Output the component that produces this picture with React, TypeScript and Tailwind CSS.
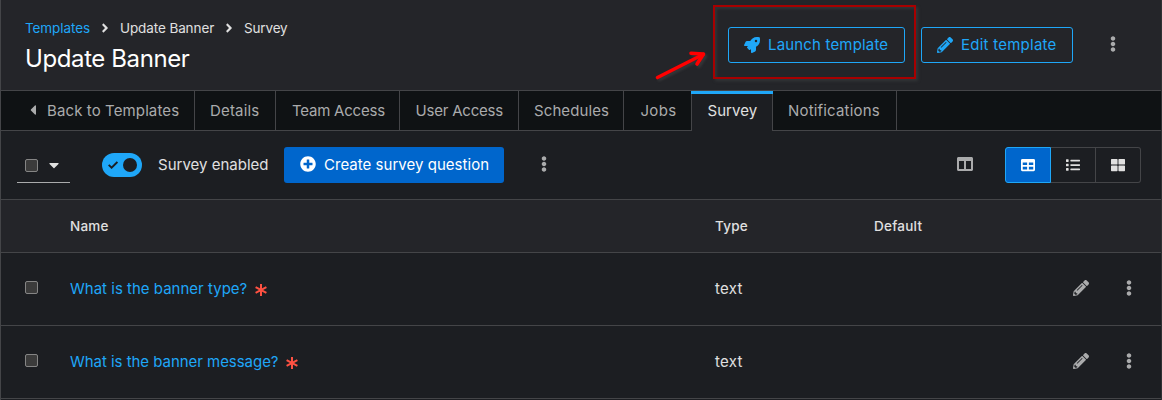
import type { ReactNode } from "react";
import {
  FaAngleRight,
  FaCaretDown,
  FaCaretLeft,
  FaColumns,
  FaEllipsisV,
  FaList,
  FaPencilAlt,
  FaPlusCircle,
  FaRocket,
  FaTable,
  FaThLarge,
} from "react-icons/fa";

type Tab = { label: string; className: string; active?: boolean; back?: boolean };

const tabs: Tab[] = [
  { label: "Back to Templates", className: "w-[194px] pl-[46px] tracking-[0.11px]", back: true },
  { label: "Details", className: "w-[81px] pl-[15px] tracking-[0.18px]" },
  { label: "Team Access", className: "w-[124px] pl-[16px] tracking-[-0.22px]" },
  { label: "User Access", className: "w-[119px] pl-[15.5px] tracking-[-0.2px]" },
  { label: "Schedules", className: "w-[105px] pl-[15px] tracking-[0.1px]" },
  { label: "Jobs", className: "w-[68px] pl-[16.5px] tracking-[0.3px]" },
  { label: "Survey", className: "w-[81px] pl-[15.5px] tracking-[0.05px]", active: true },
  { label: "Notifications", className: "w-[124px] pl-[15px] tracking-[0.18px]" },
];

const questions = [
  { name: "What is the banner type?", type: "text", tracking: "tracking-[0.01px]" },
  { name: "What is the banner message?", type: "text", tracking: "tracking-[-0.04px]" },
];

function Checkbox() {
  return <span className="block size-[13px] shrink-0 rounded-[2px] border border-[#858585] bg-[#3b3b3b]" />;
}

function Kebab() {
  return <FaEllipsisV className="block size-4 shrink-0 text-[#aaabac]" />;
}

function Asterisk() {
  return (
    <svg className="mt-[2px] ml-2 block h-3 w-3 shrink-0" viewBox="0 0 12 12" fill="none" stroke="#fe5142" strokeWidth="2">
      <path d="M6 0V12M0.6 3.2L11.4 8.8M11.4 3.2L0.6 8.8" />
    </svg>
  );
}

function OutlineButton({ children, className }: { children: ReactNode; className: string }) {
  return (
    <button className={`flex h-9 items-center gap-2 rounded-[3px] border border-[#1fa7f8] pl-[15px] text-[#1fa7f8] ${className}`}>
      {children}
    </button>
  );
}

function PageHeader() {
  return (
    <header className="flex h-[91px] border-b border-[#444548] bg-[#242529] pl-6">
      <div className="w-[703px] pt-[18px]">
        <nav className="flex h-5 items-center text-[13.5px] leading-5 text-[#e0e0e0]">
          <a className="w-[73px] tracking-[-0.08px] text-[#1fa7f8]">Templates</a>
          <FaAngleRight className="size-[14px]" />
          <span className="ml-2 w-[102px] tracking-[-0.1px]">Update Banner</span>
          <FaAngleRight className="size-[14px]" />
          <span className="ml-2 tracking-[-0.15px]">Survey</span>
        </nav>
        <h1 className="mt-[6px] text-[24px] leading-[30px] font-[430] tracking-[-0.4px] text-white">Update Banner</h1>
      </div>
      <div className="relative mt-[27px] flex h-9 items-center">
        <OutlineButton className="w-[177px]">
          <FaRocket className="size-4" />
          <span className="tracking-[0.17px] whitespace-nowrap">Launch template</span>
        </OutlineButton>
        <OutlineButton className="ml-4 w-[152px]">
          <FaPencilAlt className="size-4" />
          <span className="tracking-[0.25px] whitespace-nowrap">Edit template</span>
        </OutlineButton>
        <span className="-mt-[2px] ml-8">
          <Kebab />
        </span>
        <div className="absolute -top-[22px] -left-[15px] h-[74px] w-[203px] border-2 border-[#a80000] shadow-[2px_2px_3px_rgba(75,80,80,0.4),inset_2px_2px_3px_rgba(75,80,80,0.35)]" />
        <svg
          className="absolute top-[20px] -left-[76px] h-9 w-[58px] drop-shadow-[2px_2px_1px_rgba(80,80,80,0.4)]"
          viewBox="0 0 58 36"
          fill="none"
          stroke="#ff0000"
          strokeWidth="3.6"
          strokeLinecap="round"
          strokeLinejoin="round"
        >
          <path d="M5.5 30.5L51 7.5" />
          <path d="M39 6.2L51.5 7L45 17" />
        </svg>
      </div>
    </header>
  );
}

function TabBar() {
  return (
    <nav className="flex h-10 bg-[#0f1214] text-[#aaabac]">
      {tabs.map((tab) => (
        <div
          key={tab.label}
          className={`relative flex shrink-0 items-center border-r border-r-[#444548] pb-px whitespace-nowrap ${tab.className} ${
            tab.active ? "bg-[#1c1e22] text-[#e0e0e0]" : "shadow-[inset_0_-1px_0_#444548]"
          }`}
        >
          {tab.back && <FaCaretLeft className="absolute top-[11px] left-[24px] size-4" />}
          {tab.active && <span className="absolute top-0 -right-px -left-px h-[3px] bg-[#1fa7f8]" />}
          {tab.label}
        </div>
      ))}
      <div className="grow shadow-[inset_0_-1px_0_#444548]" />
    </nav>
  );
}

function Toolbar() {
  return (
    <div className="flex h-[69px] items-start border-b border-[#444548] pt-4 pl-4">
      <div className="flex h-9 w-[53px] items-center border-b border-[#aaabac] pl-2">
        <span className="mt-[2px]">
          <Checkbox />
        </span>
        <FaCaretDown className="ml-2 size-4 text-[#e0e0e0]" />
      </div>
      <div className="ml-8 flex h-9 w-[182px] items-center">
        <span className="flex h-6 w-10 items-center justify-between rounded-full bg-[#1fa7f8] pr-[5px] pl-[6px]">
          <svg className="h-[8px] w-[10px]" viewBox="0 0 10 8" fill="none" stroke="#1c1e22" strokeWidth="1.9">
            <path d="M0.7 3.9L3.6 6.7L9.4 1" />
          </svg>
          <span className="size-[14px] rounded-full bg-[#1c1e22]" />
        </span>
        <span className="ml-4 tracking-[0.01px] text-[#e0e0e0]">Survey enabled</span>
      </div>
      <button className="flex h-9 w-[220px] items-center rounded-[3px] bg-[#0066cc] pl-4 text-white">
        <FaPlusCircle className="-mt-[2px] size-4" />
        <span className="ml-2 tracking-[0.03px]">Create survey question</span>
      </button>
      <span className="mt-[9px] ml-8">
        <Kebab />
      </span>
      <FaColumns className="mt-[9px] ml-auto size-4 text-[#aaabac]" />
      <div className="mr-5 ml-8 flex h-9 text-[#e0e0e0]">
        <span className="flex w-[46px] items-center justify-center rounded-l-[3px] border border-[#1fa7f8] bg-[#0066cc] text-white">
          <FaTable className="size-[14px]" />
        </span>
        <span className="flex w-[45px] items-center justify-center border-y border-r border-[#444548]">
          <FaList className="size-[14px]" />
        </span>
        <span className="flex w-[45px] items-center justify-center rounded-r-[3px] border-y border-r border-[#444548]">
          <FaThLarge className="size-[14px]" />
        </span>
      </div>
    </div>
  );
}

function QuestionTable() {
  return (
    <div>
      <div className="flex h-[53px] items-center border-b border-[#444548] bg-[#242529] pl-[69px] text-[13.5px] font-medium text-[#e0e0e0]">
        <span className="w-[645px] tracking-[0.2px]">Name</span>
        <span className="w-[159px] tracking-[0.2px]">Type</span>
        <span className="tracking-[0.25px]">Default</span>
      </div>
      {questions.map((q) => (
        <div key={q.name} className="flex h-[73px] items-center border-b border-[#444548] pl-6">
          <span className="-mt-[3px]">
            <Checkbox />
          </span>
          <div className="ml-8 flex w-[645px] items-center">
            <a className={`text-[#1fa7f8] ${q.tracking}`}>{q.name}</a>
            <Asterisk />
          </div>
          <span className="w-[358px] tracking-[0.3px] text-[#e0e0e0]">{q.type}</span>
          <FaPencilAlt className="-mt-[2px] size-4 text-[#aaabac]" />
          <span className="-mt-[2px] ml-8">
            <Kebab />
          </span>
        </div>
      ))}
    </div>
  );
}

export default function App() {
  return (
    <div className="h-[400px] w-[1162px] overflow-hidden border-r border-l border-r-[#303134] border-l-[#444548] bg-[#1c1e22] font-['Inter','Liberation_Sans',sans-serif] text-[15px] leading-6 font-normal">
      <PageHeader />
      <TabBar />
      <Toolbar />
      <QuestionTable />
    </div>
  );
}
